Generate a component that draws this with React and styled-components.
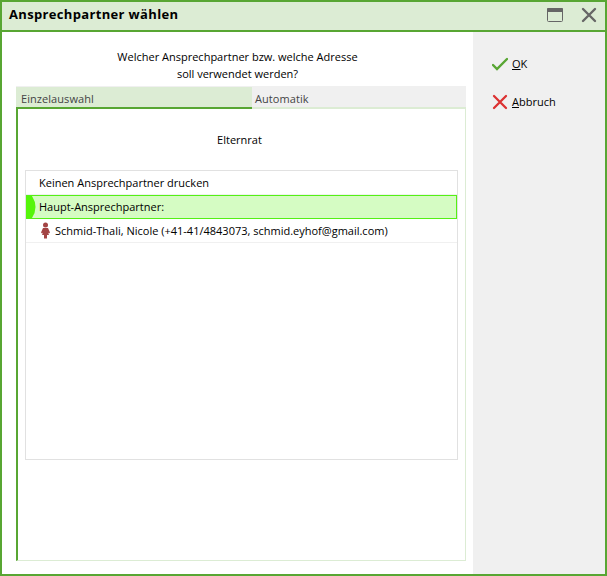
import styled, { createGlobalStyle } from "styled-components";

const GlobalStyle = createGlobalStyle`
  * {
    box-sizing: border-box;
  }

  body {
    margin: 0;
    font-family: "Open Sans", "Noto Sans", sans-serif;
    font-size: 11px;
    color: #000;
  }
`;

const Dialog = styled.div`
  display: flex;
  flex-direction: column;
  width: 607px;
  height: 576px;
  border: 2px solid #58a633;
  background-color: #fff;
`;

const TitleBar = styled.header`
  display: flex;
  justify-content: space-between;
  height: 30px;
  padding-left: 7px;
  padding-right: 8px;
  background-color: #dcecd4;
  border-bottom: 2px solid #58a633;
`;

const Title = styled.h1`
  margin: 0;
  font-size: 13px;
  font-weight: 700;
  line-height: 25px;
  letter-spacing: 0.34px;
  white-space: nowrap;
`;

const WindowButtons = styled.div`
  display: flex;
  gap: 18px;
  padding-top: 5px;
`;

const Body = styled.div`
  display: flex;
  flex: 1;
`;

const Content = styled.main`
  width: 471px;
  padding: 16px 7px 0 14px;
`;

const Question = styled.p`
  margin: 0 7px 0 0;
  height: 38px;
  line-height: 17px;
  text-align: center;
`;

const Tabs = styled.div`
  display: flex;
  height: 23px;
  background-color: #f0f0f0;
  border-top: 1px solid #f0f0f0;
`;

const Tab = styled.div`
  width: ${(props) => (props.$active ? "236px" : "214px")};
  padding-left: ${(props) => (props.$active ? "5px" : "3px")};
  line-height: 24px;
  letter-spacing: 0.06px;
  color: #444;
  background-color: ${(props) => (props.$active ? "#dcecd4" : "#f0f0f0")};
  border-bottom: 2px solid ${(props) => (props.$active ? "#58a633" : "#dcecd4")};
`;

const Panel = styled.section`
  height: 452px;
  padding: 22px 7px 0;
  border: solid #dcecd4;
  border-width: 0 1px 1px 0;
  border-left: 2px solid #58a633;
`;

const Group = styled.div`
  height: 39px;
  padding-right: 4px;
  line-height: 17px;
  text-align: center;
`;

const List = styled.div`
  width: 433px;
  height: 290px;
  border: 1px solid #e1e1e1;
`;

const Row = styled.div`
  display: flex;
  align-items: center;
  height: 24px;
  padding-left: 13px;
  white-space: nowrap;
  border-bottom: 1px solid #f0f0f0;
`;

const SelectedRow = styled(Row)`
  align-items: flex-start;
  padding-left: 0;
  line-height: 21px;
  background-color: #d5fcc3;
  border: 1px solid #55f015;
  border-left: 0;
`;

const Marker = styled.svg`
  flex: none;
  width: 10px;
  height: 22px;
  margin-right: 3px;
`;

const PersonIcon = styled.svg`
  flex: none;
  width: 12px;
  height: 17px;
  margin-right: 4px;
`;

const Sidebar = styled.aside`
  flex: 1;
  display: flex;
  flex-direction: column;
  gap: 18px;
  padding: 22px 0 0 19px;
  background-color: #f0f0f0;
`;

const Action = styled.button`
  display: flex;
  align-items: center;
  gap: 4px;
  height: 20px;
  padding: 0;
  border: 0;
  background: none;
  font: inherit;
  color: #000;

  span {
    margin-top: -2px;
  }

  u {
    text-underline-offset: 1px;
    text-decoration-skip-ink: none;
  }
`;

export default function App() {
  return (
    <>
      <GlobalStyle />
      <Dialog>
        <TitleBar>
          <Title>Ansprechpartner wählen</Title>
          <WindowButtons>
            <svg width="16" height="16" viewBox="0 0 16 16">
              <rect x="0.5" y="1.5" width="15" height="13" rx="1" fill="none" stroke="#666" />
              <path d="M0 5V2Q0 1 1 1H15Q16 1 16 2V5Z" fill="#666" />
            </svg>
            <svg width="16" height="16" viewBox="0 0 16 16">
              <path d="M2 2L14 14M14 2L2 14" stroke="#666" strokeWidth="2.4" strokeLinecap="round" />
            </svg>
          </WindowButtons>
        </TitleBar>
        <Body>
          <Content>
            <Question>
              Welcher Ansprechpartner bzw. welche Adresse
              <br />
              soll verwendet werden?
            </Question>
            <Tabs>
              <Tab $active>Einzelauswahl</Tab>
              <Tab>Automatik</Tab>
            </Tabs>
            <Panel>
              <Group>Elternrat</Group>
              <List>
                <Row>Keinen Ansprechpartner drucken</Row>
                <SelectedRow>
                  <Marker viewBox="0 0 10 22">
                    <path d="M0 0H6Q13 11 6 22H0Z" fill="#55f50a" />
                  </Marker>
                  Haupt-Ansprechpartner:
                </SelectedRow>
                <Row>
                  <PersonIcon viewBox="0 0 12 17">
                    <circle cx="6.5" cy="3" r="2.5" fill="#a34444" />
                    <path d="M4 6H9L11 10.500L10 11.500L9 10.500L10 13H8V16.500H5V13H3L4 10.500L3 11.500L2 10.500Z" fill="#a34444" />
                  </PersonIcon>
                  Schmid-Thali, Nicole (+41-41/4843073, schmid.eyhof@gmail.com)
                </Row>
              </List>
            </Panel>
          </Content>
          <Sidebar>
            <Action>
              <svg width="16" height="16" viewBox="0 0 16 16">
                <path d="M1 9L5 13L15 3" fill="none" stroke="#58a633" strokeWidth="2.4" strokeLinecap="round" />
              </svg>
              <span>
                <u>O</u>K
              </span>
            </Action>
            <Action>
              <svg width="16" height="16" viewBox="0 0 16 16">
                <path d="M2 2L14 14M14 2L2 14" stroke="#dc3232" strokeWidth="2.3" strokeLinecap="round" />
              </svg>
              <span>
                <u>A</u>bbruch
              </span>
            </Action>
          </Sidebar>
        </Body>
      </Dialog>
    </>
  );
}
